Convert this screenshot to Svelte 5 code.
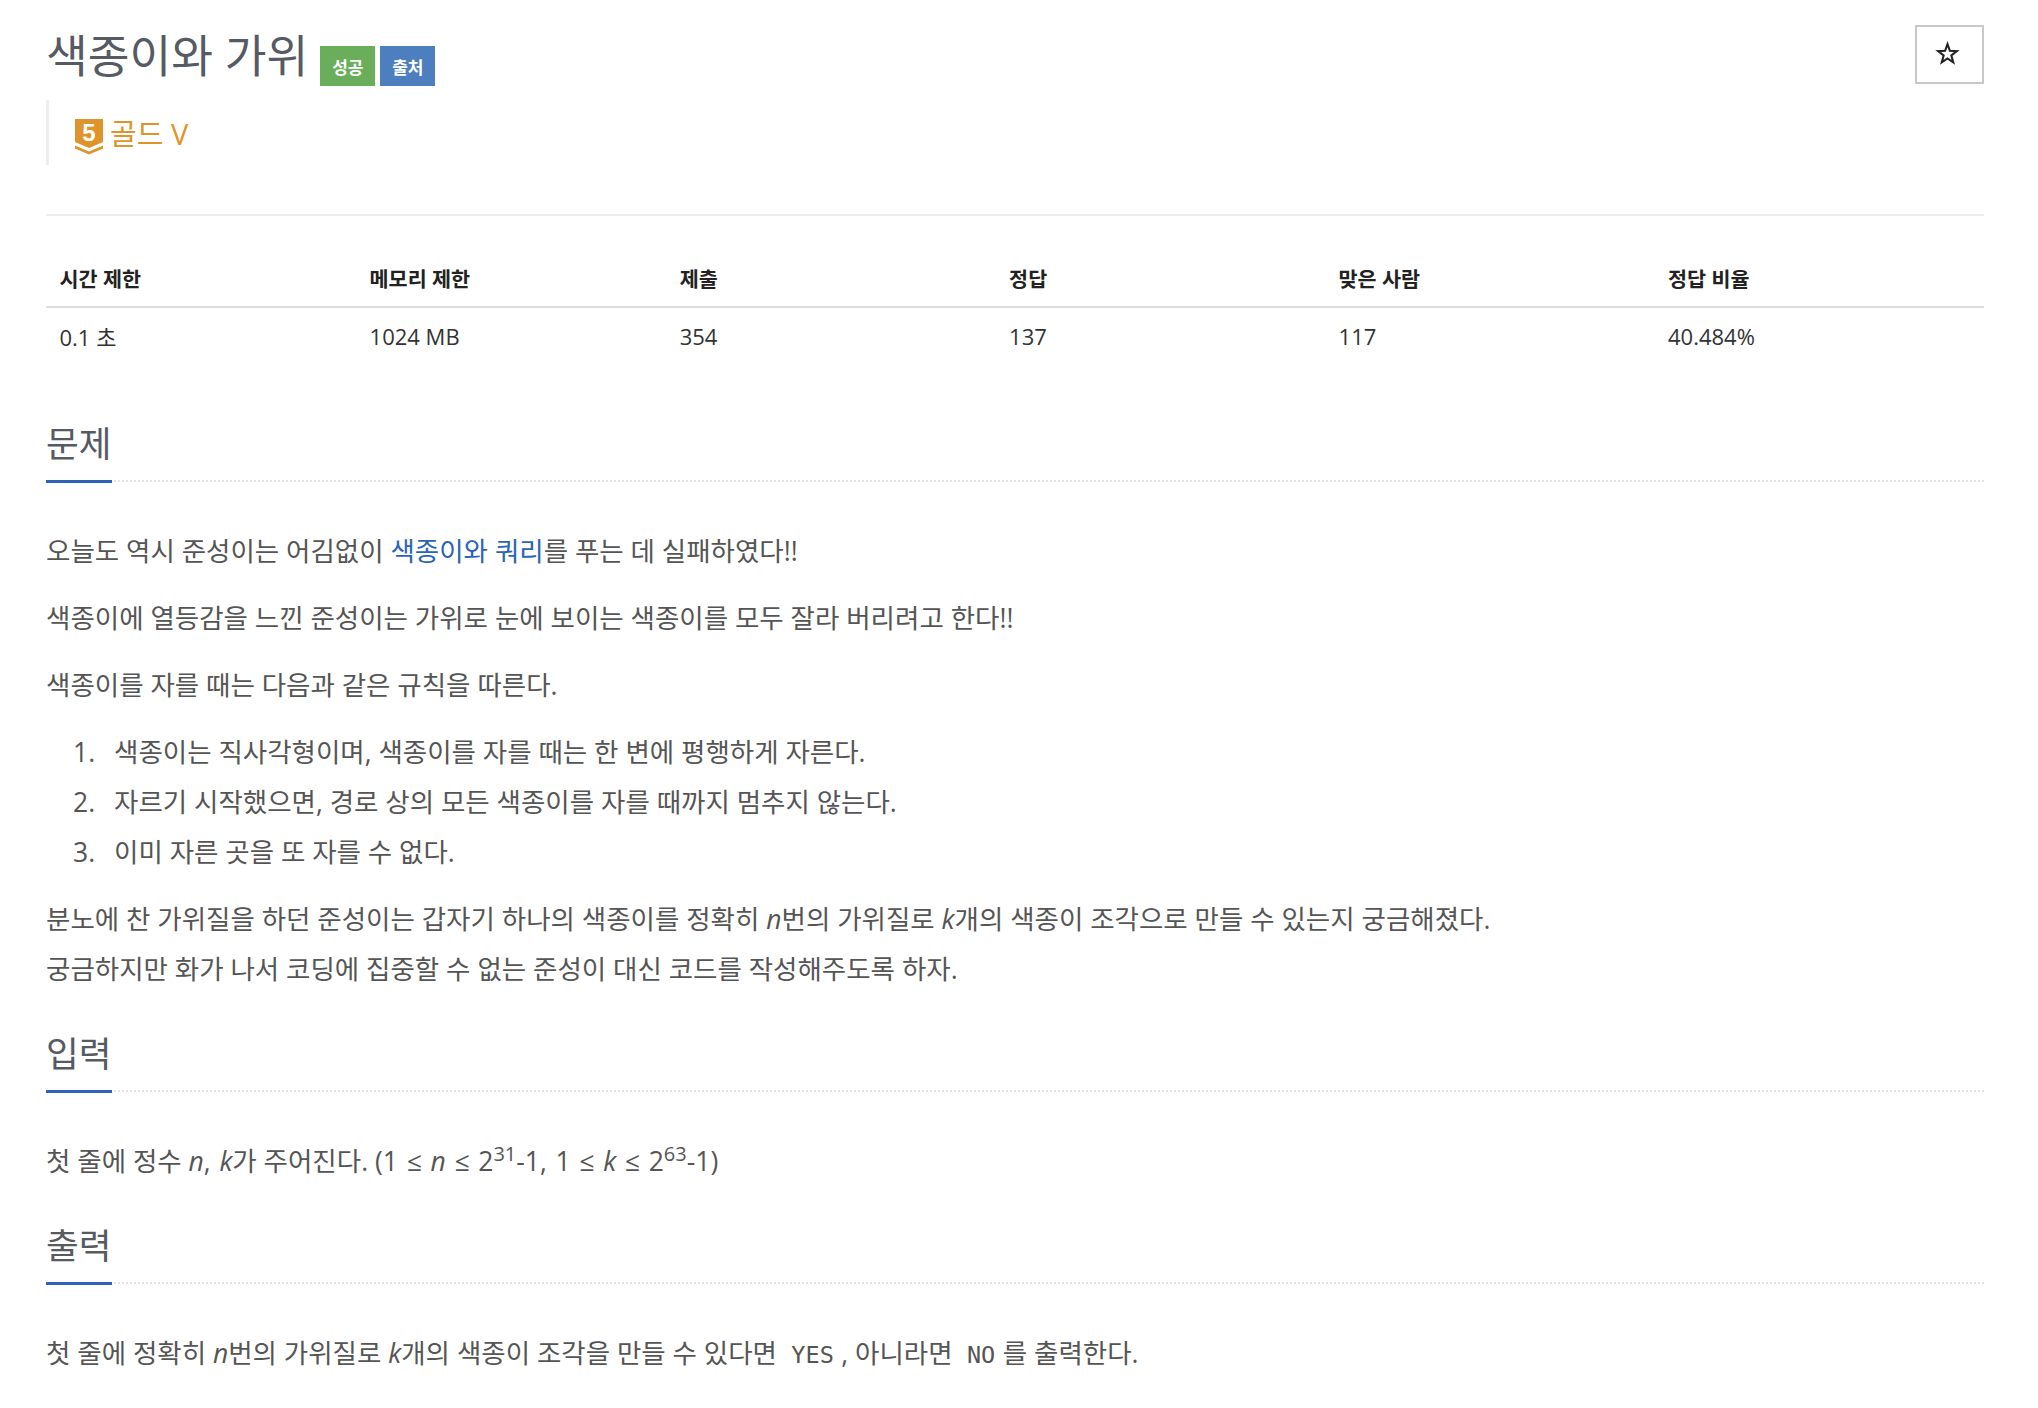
<script>
  const limits = [
    ['시간 제한', '0.1 초'],
    ['메모리 제한', '1024 MB'],
    ['제출', '354'],
    ['정답', '137'],
    ['맞은 사람', '117'],
    ['정답 비율', '40.484%']
  ];
</script>

<div class="page">
  <header class="head">
    <div class="title-row">
      <h1>색종이와 가위</h1>
      <span class="badge green">성공</span>
      <span class="badge blue">출처</span>
    </div>
    <button class="star" aria-label="즐겨찾기">
      <svg width="25" height="25" viewBox="0 0 24 24"><path d="M12 3l2.300 6.400 6.700.3-5.300 4.200 1.800 6.600-5.500-3.800-5.500 3.800 1.800-6.600-5.300-4.200 6.700-.3z" fill="none" stroke="#222" stroke-width="2" stroke-linejoin="miter"/></svg>
    </button>
  </header>

  <div class="tier">
    <svg class="tier-icon" width="28" height="36" viewBox="0 0 28 36">
      <path d="M0 0H28V23L14 29 0 23Z" fill="#df942b"/>
      <path d="M0 26.500L14 32.500 28 26.500V29.500L14 35.500 0 29.500Z" fill="#df942b"/>
      <text x="14" y="21.500" text-anchor="middle" class="tier-num">5</text>
    </svg>
    <span>골드 V</span>
  </div>

  <hr />

  <table>
    <thead>
      <tr>{#each limits as col}<th>{col[0]}</th>{/each}</tr>
    </thead>
    <tbody>
      <tr>{#each limits as col}<td>{col[1]}</td>{/each}</tr>
    </tbody>
  </table>

  <section class="first">
    <h2><span>문제</span></h2>
    <p>오늘도 역시 준성이는 어김없이 <a href="#q">색종이와 쿼리</a>를 푸는 데 실패하였다!!</p>
    <p>색종이에 열등감을 느낀 준성이는 가위로 눈에 보이는 색종이를 모두 잘라 버리려고 한다!!</p>
    <p>색종이를 자를 때는 다음과 같은 규칙을 따른다.</p>
    <ol>
      <li>색종이는 직사각형이며, 색종이를 자를 때는 한 변에 평행하게 자른다.</li>
      <li>자르기 시작했으면, 경로 상의 모든 색종이를 자를 때까지 멈추지 않는다.</li>
      <li>이미 자른 곳을 또 자를 수 없다.</li>
    </ol>
    <p>분노에 찬 가위질을 하던 준성이는 갑자기 하나의 색종이를 정확히 <i>n</i>번의 가위질로 <i>k</i>개의 색종이 조각으로 만들 수 있는지 궁금해졌다.<br />궁금하지만 화가 나서 코딩에 집중할 수 없는 준성이 대신 코드를 작성해주도록 하자.</p>
  </section>

  <section>
    <h2><span>입력</span></h2>
    <p>첫 줄에 정수 <span class="math"><i>n</i>, <i>k</i></span>가 주어진다. <span class="math">(1 ≤ <i>n</i> ≤ 2<sup>31</sup>-1, 1 ≤ <i>k</i> ≤ 2<sup>63</sup>-1)</span></p>
  </section>

  <section>
    <h2><span>출력</span></h2>
    <p>첫 줄에 정확히 <i>n</i>번의 가위질로 <i>k</i>개의 색종이 조각을 만들 수 있다면 <code>YES</code>, 아니라면 <code>NO</code>를 출력한다.</p>
  </section>
</div>

<style>
  :global(body) {
    margin: 0;
    background: #fff;
    font-family: "Open Sans", "Noto Sans CJK KR", sans-serif;
    color: #333;
  }
  .page {
    padding: 0 54px 0 46px;
    height: 1408px;
    box-sizing: border-box;
    overflow: hidden;
  }
  .head {
    display: flex;
    justify-content: space-between;
    align-items: flex-start;
    height: 100px;
  }
  .title-row {
    display: flex;
    align-items: flex-start;
    padding-top: 22px;
  }
  h1 {
    margin: 0 12px 0 0;
    font-size: 45.400px;
    line-height: 66px;
    font-weight: 400;
    color: #555a63;
  }
  .badge {
    margin-top: 24px;
    width: 55px;
    height: 40px;
    margin-right: 5px;
    display: flex;
    align-items: center;
    justify-content: center;
    color: #fff;
    font-size: 17px;
    font-weight: 700;
  }
  .green { background: #6aae5c; }
  .blue { background: #4d7fbf; }
  .star {
    margin-top: 25px;
    width: 69px;
    height: 59px;
    background: #fff;
    border: 2px solid #c8c8c8;
    display: flex;
    align-items: center;
    justify-content: center;
    padding: 0 4px 3px 0;
  }
  .tier {
    border-left: 3px solid #eee;
    height: 65px;
    display: flex;
    align-items: flex-start;
    padding-left: 26px;
    box-sizing: border-box;
    color: #df942b;
    font-size: 29px;
    line-height: 44px;
    gap: 7px;
  }
  .tier-icon { margin-top: 19px; }
  .tier span { margin-top: 12px; }
  .tier-num {
    font: 700 24px "Liberation Sans", sans-serif;
    fill: #fff;
  }
  hr {
    border: 0;
    border-top: 2px solid #eee;
    margin: 49px 0 0;
  }
  table {
    width: 100%;
    border-collapse: collapse;
    table-layout: fixed;
    margin-top: 26px;
  }
  th {
    text-align: left;
    padding: 20px 13.500px 12px;
    height: 65px;
    box-sizing: border-box;
    border-bottom: 2px solid #ddd;
    color: #222;
    font-weight: 700;
    font-size: 20.700px;
    vertical-align: bottom;
    line-height: 30px;
  }
  td {
    padding: 0 13.500px;
    height: 56px;
    color: #333;
    font-size: 22px;
  }
  th:nth-child(1), th:nth-child(2) { width: 16%; }
  section { margin-top: 34px; }
  section.first { margin-top: 54px; }
  h2 {
    margin: 0 0 44px;
    border-bottom: 2px dotted #e2e4e8;
    height: 62px;
    font-size: 35.600px;
    font-weight: 400;
    line-height: 50px;
    color: #555a63;
  }
  h2 span {
    display: inline-block;
    min-width: 66px;
    height: 62px;
    border-bottom: 3px solid #2a64b4;
  }
  p {
    margin: 0 0 17px;
    font-size: 26.500px;
    line-height: 50px;
    color: #555;
  }
  ol {
    margin: 0 0 17px;
    padding: 0 0 0 27px;
    font-size: 26.500px;
    line-height: 50px;
    color: #555;
    list-style: none;
    counter-reset: step;
  }
  li {
    display: flex;
    counter-increment: step;
  }
  li::before {
    content: counter(step) ".";
    flex: 0 0 41px;
  }
  .math { word-spacing: 1.800px; }
  a { color: #2a64b4; text-decoration: none; }
  sup { font-size: 20px; line-height: 0; }
  code {
    font-family: "DejaVu Sans Mono", monospace;
    font-size: 23.500px;
    padding: 0 7.500px;
    color: #555;
  }
</style>
